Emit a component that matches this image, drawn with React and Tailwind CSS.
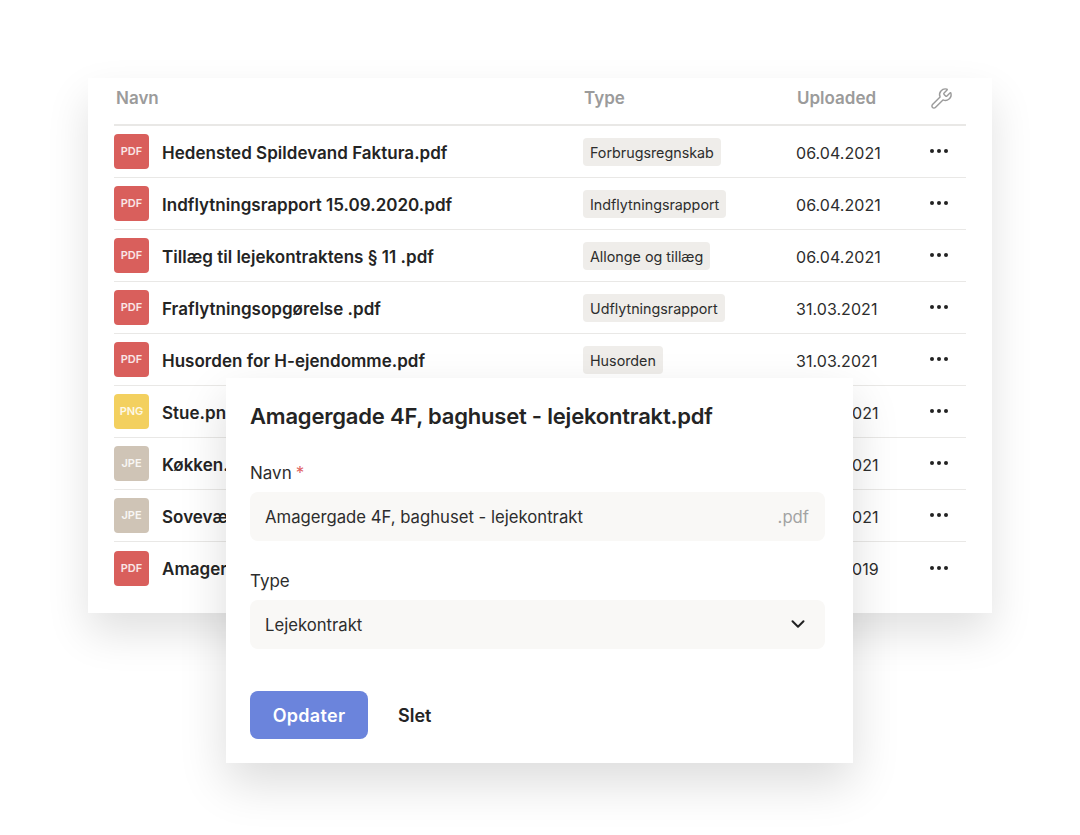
import React from 'react';
import { ChevronDown, Wrench } from 'lucide-react';

const FONT = { fontFamily: 'Inter' };

// the last four rows sit behind the dialog, only the visible part of the text is listed
const ROWS = [
  { ext: 'PDF', name: 'Hedensted Spildevand Faktura.pdf', type: 'Forbrugsregnskab', date: '06.04.2021' },
  { ext: 'PDF', name: 'Indflytningsrapport 15.09.2020.pdf', type: 'Indflytningsrapport', date: '06.04.2021' },
  { ext: 'PDF', name: 'Tillæg til lejekontraktens § 11 .pdf', type: 'Allonge og tillæg', date: '06.04.2021' },
  { ext: 'PDF', name: 'Fraflytningsopgørelse .pdf', type: 'Udflytningsrapport', date: '31.03.2021' },
  { ext: 'PDF', name: 'Husorden for H-ejendomme.pdf', type: 'Husorden', date: '31.03.2021' },
  { ext: 'PNG', name: 'Stue.pn', date: '021', covered: true },
  { ext: 'JPE', name: 'Køkken.', date: '021', covered: true },
  { ext: 'JPE', name: 'Sovevæ', date: '021', covered: true },
  { ext: 'PDF', name: 'Amager', date: '019', covered: true },
];

const EXT_BG = { PDF: 'bg-[#d95f5c]', PNG: 'bg-[#f3d05f]', JPE: 'bg-[#cfc4b6]' };

function Dots() {
  return (
    <div className="flex gap-[3px] pb-[1px] pl-[1px]">
      <span className="h-[4px] w-[4px] rounded-full bg-[#222]" />
      <span className="h-[4px] w-[4px] rounded-full bg-[#222]" />
      <span className="h-[4px] w-[4px] rounded-full bg-[#222]" />
    </div>
  );
}

function Row({ row }) {
  return (
    <div className="grid h-[52px] grid-cols-[469px_213px_1fr] items-center border-b border-[#e9e8e6] last:border-b-0">
      <div className="flex items-center gap-[13px]">
        <div className={`flex h-[35px] w-[35px] items-center justify-center rounded-[4px] text-[11px] font-semibold text-white/85 ${EXT_BG[row.ext]}`}>
          {row.ext}
        </div>
        <span className="whitespace-nowrap pt-[4px] text-[17px] font-semibold tracking-[0.02px] text-[#242424]">
          {row.name}
        </span>
      </div>
      <div>
        {row.type && (
          <span className="inline-block rounded-[4px] bg-[#efedea] px-[7px] pb-[4px] pt-[6px] text-[14.3px] leading-[18px] text-[#2d2d2d]">
            {row.type}
          </span>
        )}
      </div>
      <div className="flex items-center">
        <span className={`pt-[2px] text-[16px] tracking-[0.05px] text-[#2d2d2d] ${row.covered ? 'ml-[56px] w-[77px]' : 'w-[133px]'}`}>
          {row.date}
        </span>
        <Dots />
      </div>
    </div>
  );
}

function Field({ label, required, children }) {
  return (
    <div>
      <div className="mb-[8px] text-[17px] leading-[22px] text-[#2d2d2d]">
        {label}
        {required && <span className="ml-[4px] text-[#e0625f]">*</span>}
      </div>
      <div className="flex h-[49px] items-center justify-between rounded-[8px] bg-[#f9f8f6] pl-[15px] pr-[16px] pt-[3px] text-[16.7px] text-[#2d2d2d]">
        {children}
      </div>
    </div>
  );
}

export default function App() {
  return (
    <div className="relative h-[835px] w-[1080px] overflow-hidden bg-white pl-[88px] pt-[78px] antialiased" style={FONT}>
      {/* File table */}
      <div className="h-[535px] w-[904px] bg-white px-[26px] shadow-[0_20px_40px_rgba(0,0,0,0.12)]">
        <div className="grid h-[48px] grid-cols-[470px_213px_133px_1fr] items-center border-b-2 border-[#e9e8e6] pb-[4px] text-[17px] font-semibold text-[#9b9b9b]">
          <span className="pl-[2px]">Navn</span>
          <span>Type</span>
          <span>Uploaded</span>
          <Wrench className="mb-[2px] h-[23px] w-[23px] text-[#9b9b9b]" strokeWidth={1.5} />
        </div>
        {ROWS.map((row, i) => (
          <Row key={i} row={row} />
        ))}
      </div>

      {/* Edit dialog */}
      <div className="absolute left-[226px] top-[378px] h-[385px] w-[627px] bg-white px-[24px] pt-[24px] shadow-[0_20px_45px_rgba(0,0,0,0.14)]">
        <h2 className="mb-[32px] text-[22px] font-semibold leading-[28px] tracking-[-0.2px] text-[#242424]">
          Amagergade 4F, baghuset - lejekontrakt.pdf
        </h2>
        <div className="flex w-[575px] flex-col gap-[29px]">
          <Field label="Navn" required>
            <span>Amagergade 4F, baghuset - lejekontrakt</span>
            <span className="text-[#a3a3a3]">.pdf</span>
          </Field>
          <Field label="Type">
            <span>Lejekontrakt</span>
            <ChevronDown className="mb-[5px] h-[22px] w-[22px] text-[#222]" strokeWidth={2.2} />
          </Field>
        </div>
        <div className="mt-[42px] flex items-center gap-[30px]">
          <button className="h-[48px] w-[118px] rounded-[8px] bg-[#6b84dc] pt-[1px] text-[18px] font-semibold tracking-[0.3px] text-white">Opdater</button>
          <button className="pt-[1px] text-[18px] font-semibold text-[#242424]">Slet</button>
        </div>
      </div>
    </div>
  );
}
